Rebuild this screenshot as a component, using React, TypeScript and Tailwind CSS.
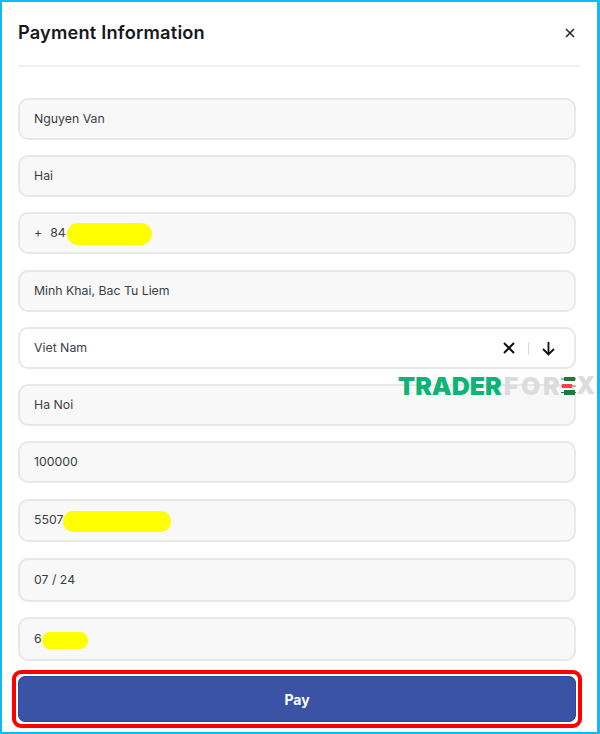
export default function App() {
  const font = { fontFamily: '"Inter", "Liberation Sans", sans-serif' };
  const field =
    "flex items-center w-full rounded-[10px] border-2 border-[#e8e8e8] bg-[#f8f8f8] pl-[14px] text-[12.3px] text-[#3a3f44]";
  return (
    <div style={font} className="relative w-[600px] h-[734px] bg-white border-2 border-r-[3px] border-[#12b9f7] overflow-hidden pl-4 pr-[17px]">
      <div className="flex items-center justify-between h-[65px] border-b-2 border-[#f1f1f1] pr-[1px]">
        <h1 className="text-[18.2px] font-semibold text-[#15181c] tracking-[0.2px] -mt-[2px]">Payment Information</h1>
        <svg className="mr-[4px] -mt-[2px]" width="10" height="10" viewBox="0 0 10 10" stroke="#1c2230" strokeWidth="1.5" fill="none">
          <path d="M1 1l8 8M9 1l-8 8" />
        </svg>
      </div>

      <div className="w-[558px] flex flex-col">
        <div className={`${field} h-[42px] mt-[31px]`}>Nguyen Van</div>
        <div className={`${field} h-[42px] mt-[15px]`}>Hai</div>
        <div className={`${field} h-[42px] mt-[15px]`}>
          <span>+</span>
          <span className="ml-[8px]">84</span>
          <span className="ml-[1px] mt-[1px] w-[85px] h-[22px] rounded-[11px] bg-[#ffff00]" />
        </div>
        <div className={`${field} h-[42px] mt-[16px]`}>Minh Khai, Bac Tu Liem</div>
        <div className="flex items-center w-full h-[42px] mt-[15px] rounded-[10px] border-2 border-[#e8e8e8] bg-white pl-[14px] pr-[18px] text-[12.3px] text-[#3a3f44]">
          <span className="flex-1 mt-[1px]">Viet Nam</span>
          <svg width="14" height="14" viewBox="0 0 14 14" stroke="#111" strokeWidth="2" fill="none">
            <path d="M2 2l10 10M12 2l-10 10" />
          </svg>
          <span className="w-[1px] h-[13px] bg-[#d9d9d9] mx-[12px]" />
          <svg width="15" height="15" viewBox="0 0 15 15" stroke="#111" strokeWidth="1.8" fill="none">
            <path d="M7.5 1v12.5M2 8l5.5 5.5L13 8" />
          </svg>
        </div>
        <div className={`${field} h-[42px] mt-[15px]`}>Ha Noi</div>
        <div className={`${field} h-[42px] mt-[15px]`}>100000</div>
        <div className={`${field} h-[43px] mt-[16px]`}>
          <span>5507</span>
          <span className="mt-[2px] w-[108px] h-[21px] rounded-[10px] bg-[#ffff00]" />
        </div>
        <div className={`${field} h-[44px] mt-[16px]`}>07 / 24</div>
        <div className={`${field} h-[44px] mt-[15px]`}>
          <span>6</span>
          <span className="mt-[2px] w-[46px] h-[17px] rounded-[8px] bg-[#ffff00]" />
        </div>

        <div className="-mx-[6px] mt-[9px] border-4 border-[#fe0000] rounded-[9px] p-[2px] bg-white">
          <button className="flex items-center justify-center w-full h-[46px] rounded-[7px] bg-[#3a53a4] border border-[#2b45a0] text-white text-[14px] font-bold">
            Pay
          </button>
        </div>
      </div>

      <div className="absolute left-[396px] top-[371px] flex items-center text-[25px] leading-[26px] font-black whitespace-nowrap">
        <span className="text-[#0fb377]">TRADER</span>
        <span className="text-[#dcdcdc] ml-[2px] tracking-[2.6px]">FOR</span>
        <svg className="-ml-[1px]" width="15" height="20" viewBox="0 0 15 20">
          <rect x="3" y="1" width="11" height="4" fill="#1f7a3a" />
          <rect x="0" y="2.5" width="15" height="1" fill="#1f7a3a" />
          <rect x="1" y="8" width="10" height="4" fill="#f7404a" />
          <rect x="0" y="9.5" width="15" height="1" fill="#f7404a" />
          <rect x="3" y="14" width="11" height="5" fill="#1f7a3a" />
          <rect x="0" y="16" width="15" height="1" fill="#1f7a3a" />
        </svg>
        <span className="text-[#dcdcdc] text-[24px] tracking-[-1px]">X</span>
      </div>
    </div>
  );
}
